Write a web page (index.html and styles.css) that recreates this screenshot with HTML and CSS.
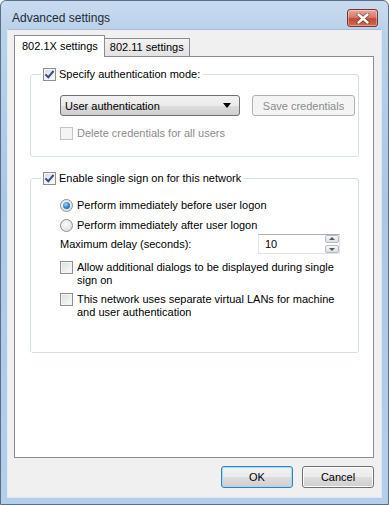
FILE: index.html
```html
<!DOCTYPE html>
<html>
<head>
<meta charset="utf-8">
<link rel="stylesheet" href="styles.css">
</head>
<body>
<div class="window">
  <div class="titlebar">
    <span class="title">Advanced settings</span>
    <span class="close">
      <svg width="14" height="11" viewBox="0 0 14 11">
        <path d="M2.5 1.5 L11.5 9.5 M11.5 1.5 L2.5 9.5" stroke="#4a1a16" stroke-width="4" stroke-linecap="round" opacity="0.55"/>
        <path d="M2.5 1.5 L11.5 9.5 M11.5 1.5 L2.5 9.5" stroke="#ffffff" stroke-width="2.4" stroke-linecap="round"/>
      </svg>
    </span>
  </div>
  <div class="client">
    <div class="tabs">
      <span class="tab active">802.1X settings</span>
      <span class="tab">802.11 settings</span>
    </div>
    <div class="panel">
      <fieldset class="group g1">
        <legend><span class="cb checked"></span><span class="lbl">Specify authentication mode:</span></legend>
        <div class="row1">
          <div class="combo"><span>User authentication</span><span class="arrow"></span></div>
          <div class="btn disabled save">Save credentials</div>
        </div>
        <div class="opt disabled del"><span class="cb dis"></span><span class="lbl">Delete credentials for all users</span></div>
      </fieldset>
      <fieldset class="group g2">
        <legend><span class="cb checked"></span><span class="lbl">Enable single sign on for this network</span></legend>
        <div class="opt r1"><span class="rb on"></span><span class="lbl">Perform immediately before user logon</span></div>
        <div class="opt r2"><span class="rb"></span><span class="lbl">Perform immediately after user logon</span></div>
        <div class="delay">
          <span class="dlabel">Maximum delay (seconds):</span>
          <div class="spin"><span class="val">10</span>
            <span class="spinbtns"><span class="sb up"></span><span class="sb down"></span></span>
          </div>
        </div>
        <div class="opt multi c1"><span class="cb"></span><span class="lbl">Allow additional dialogs to be displayed during single sign on</span></div>
        <div class="opt multi c2"><span class="cb"></span><span class="lbl">This network uses separate virtual LANs for machine and user authentication</span></div>
      </fieldset>
    </div>
    <div class="buttons">
      <div class="btn default">OK</div>
      <div class="btn">Cancel</div>
    </div>
  </div>
</div>
</body>
</html>
```
FILE: styles.css
```css
html, body { margin: 0; padding: 0; background: #ffffff; }
body { font-family: "Liberation Sans", Arial, sans-serif; font-size: 11px; color: #000; }
.window {
  width: 389px; height: 505px; box-sizing: border-box;
  border: 1px solid #5b6e84; border-radius: 6px 6px 0 0;
  background: linear-gradient(180deg, #c9dbef 0px, #bad1ea 30px, #aac7e6 200px, #b4cfea 505px);
  display: flex; flex-direction: column;
}
.titlebar {
  height: 28px; display: flex; align-items: flex-start; justify-content: space-between;
  padding: 0 10px 0 11px;
}
.title { font-size: 12px; line-height: 14px; margin-top: 10px; color: #1e2a3a; }
.close {
  margin-top: 8px; width: 29px; height: 16px; border: 1px solid #7a3530; border-radius: 3px;
  background: linear-gradient(180deg, #e9a89f 0%, #d87a6d 45%, #c24a37 55%, #d06a50 100%);
  box-shadow: inset 0 0 0 1px rgba(255,255,255,0.35);
  display: flex; align-items: center; justify-content: center;
}
.client {
  flex: 1; margin: 0 6px 6px 6px; background: #f0f0f0;
  border: 1px solid #dce7f4; border-top-color: #a6bdd8; border-left-color: #e3ecf7;
  display: flex; flex-direction: column;
}
.tabs { display: flex; align-items: flex-end; margin: 5px 0 0 6px; position: relative; z-index: 2; }
.tab {
  height: 17px; line-height: 17px; padding: 0 5px; border: 1px solid #898c95; border-bottom: none;
  background: linear-gradient(180deg, #f3f3f3, #e2e2e2); margin-left: -1px;
}
.tab.active {
  height: 21px; line-height: 20px; padding: 0 6px 0 7px; background: #fff; margin-left: 0;
  margin-bottom: -1px; border-radius: 1px 1px 0 0; z-index: 3; position: relative;
}
.panel {
  height: 400px; margin: 0 7px 0 6px; background: #fff; border: 1px solid #898c95;
}
.group {
  margin: 0 14px 0 15px; padding: 0; border: 1px solid #d5dfe5; border-radius: 3px;
}
.group legend {
  margin-left: 10px; padding: 0 3px 0 2px; display: flex; align-items: center; height: 14px;
}
.g1 { margin-top: 10px; padding-bottom: 16px; }
.g2 { margin-top: 14px; padding-bottom: 33px; }
.lbl { line-height: 13px; }
.cb {
  width: 11px; height: 11px; border: 1px solid #8e8f8f; flex: none; margin-right: 3px;
  background: linear-gradient(135deg, #dcdcdc 0%, #f0f0f0 60%, #fbfbfb 100%);
  box-shadow: inset 0 0 0 1px #f4f4f4; position: relative;
}
.cb.checked::after {
  content: ""; position: absolute; left: 3px; top: 0px; width: 3px; height: 7px;
  border: solid #3a4e8c; border-width: 0 2px 2px 0; transform: rotate(40deg);
}
.cb.dis { border-color: #c3c3c3; background: #f4f4f4; box-shadow: none; }
.disabled { color: #8b8b8b; }
.row1 { display: flex; margin: 14px 0 0 29px; }
.combo {
  width: 180px; height: 21px; box-sizing: border-box; border: 1px solid #707070; border-radius: 3px;
  background: linear-gradient(180deg, #f2f2f2 0%, #ebebeb 50%, #dddddd 51%, #cfcfcf 100%);
  display: flex; align-items: center; justify-content: space-between; padding: 0 8px 0 4px;
}
.arrow { width: 0; height: 0; border-left: 4px solid transparent; border-right: 4px solid transparent; border-top: 5px solid #000; }
.btn {
  height: 22px; box-sizing: border-box; border: 1px solid #707070; border-radius: 3px;
  background: linear-gradient(180deg, #f2f2f2 0%, #ebebeb 50%, #dddddd 51%, #cfcfcf 100%);
  display: flex; align-items: center; justify-content: center;
  box-shadow: inset 0 0 0 1px #fcfcfc;
}
.btn.save { width: 103px; height: 21px; margin-left: 12px; border-color: #adb2b5; background: #f4f4f4; box-shadow: none; }
.opt { display: flex; align-items: center; margin-left: 29px; }
.opt .cb, .opt .rb { margin-right: 4px; }
.del { margin-top: 11px; }
.rb {
  width: 11px; height: 11px; border-radius: 50%; border: 1px solid #8e8f8f; flex: none;
  background: radial-gradient(circle at 40% 40%, #fbfbfb, #d8d8d8);
  position: relative;
}
.rb.on::after {
  content: ""; position: absolute; left: 2px; top: 2px; width: 7px; height: 7px; border-radius: 50%;
  background: radial-gradient(circle at 40% 35%, #9fd4f4 0%, #2d8bd0 50%, #1a4f8a 100%);
}
.r1 { margin-top: 14px; }
.r2 { margin-top: 7px; }
.delay { display: flex; align-items: center; margin: 2px 0 0 29px; }
.dlabel { width: 198px; }
.spin {
  width: 82px; height: 20px; box-sizing: border-box; border: 1px solid #e2e3ea; border-top-color: #abadb3;
  display: flex; align-items: center; justify-content: space-between; padding-left: 6px;
}
.spinbtns { display: flex; flex-direction: column; height: 18px; margin-right: 0px; }
.sb {
  width: 14px; height: 8px; box-sizing: border-box; border: 1px solid #b8bcc2; border-radius: 2px;
  background: linear-gradient(180deg, #f6f6f6, #dedede); position: relative;
}
.sb.down { margin-top: 2px; }
.sb::after { content: ""; position: absolute; left: 3px; width: 0; height: 0; border-left: 3px solid transparent; border-right: 3px solid transparent; }
.sb.up::after { top: 1px; border-bottom: 3px solid #4d5a6a; }
.sb.down::after { top: 2px; border-top: 3px solid #4d5a6a; }
.multi { align-items: flex-start; }
.multi .lbl { width: 265px; }
.c1 { margin-top: 7px; }
.c2 { margin-top: 6px; }
.buttons { display: flex; justify-content: flex-end; gap: 9px; margin: 8px 7px 0 0; }
.buttons .btn { width: 72px; height: 22px; }
.buttons .btn.default { border-color: #3c7fb1; box-shadow: inset 0 0 0 1px #9fdcf7; }
```
